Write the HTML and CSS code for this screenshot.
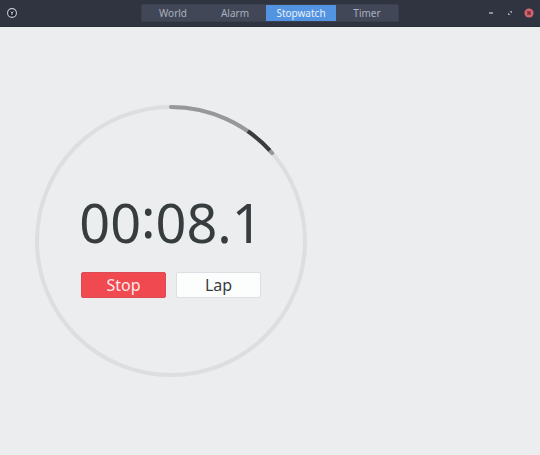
FILE: index.html
```html
<!DOCTYPE html>
<html lang="en">
<head>
    <meta charset="UTF-8">
    <meta name="viewport" content="width=device-width, initial-scale=1.0">
    <title>Clocks</title>
    <link rel="stylesheet" href="styles.css">
</head>
<body>
    <header class="titlebar">
        <button type="button" class="btn_app" aria-label="Clocks menu">
            <svg width="12" height="12" viewBox="0 0 12 12" fill="none">
                <circle cx="6" cy="6" r="4.4" fill="#1d212b" stroke="#c9ced8" stroke-width="1.1"/>
                <path d="M4.6 4.6L6 6L7.4 4.3M6.2 5.8L5.8 8" stroke="#c9ced8" stroke-width="1"/>
            </svg>
        </button>
        <nav class="tabs">
            <button type="button" class="tab">World</button>
            <button type="button" class="tab">Alarm</button>
            <button type="button" class="tab tab_wide active">Stopwatch</button>
            <button type="button" class="tab">Timer</button>
        </nav>
        <div class="win_btns">
            <button type="button" aria-label="Minimize">
                <svg width="10" height="10" viewBox="0 0 10 10"><path d="M3 5H7" stroke="#b4bac6" stroke-width="1.4"/></svg>
            </button>
            <button type="button" aria-label="Maximize">
                <svg width="10" height="10" viewBox="0 0 10 10" fill="#a4abb8"><path d="M4.6 3H7V5.4ZM3 4.6V7H5.4Z"/></svg>
            </button>
            <button type="button" aria-label="Close">
                <svg width="10" height="10" viewBox="0 0 10 10">
                    <circle cx="5" cy="5" r="4.6" fill="#d0656f"/>
                    <path d="M3.4 3.4L6.6 6.6M6.6 3.4L3.4 6.6" stroke="#7e2c3c" stroke-width="1.5"/>
                </svg>
            </button>
        </div>
    </header>

    <main class="stopwatch">
        <div class="dial">
            <svg class="dial_ring" viewBox="0 0 272 272" fill="none" stroke-width="4">
                <circle cx="136" cy="136" r="134" stroke="#dcdee0"/>
                <!-- elapsed seconds, one degree per path unit -->
                <g transform="rotate(-90 136 136)">
                    <circle cx="136" cy="136" r="134" pathLength="360" stroke="#96989a" stroke-linecap="round" stroke-dasharray="49 311"/>
                    <circle cx="136" cy="136" r="134" pathLength="360" stroke="#3b3c3e" stroke-dasharray="0 35 12.5 312.5"/>
                </g>
            </svg>
            <div class="dial_inner">
                <div class="time" role="timer">00<span class="colon">:</span>08.1</div>
                <div class="btn_box">
                    <button type="button" class="btn btn_stop">Stop</button>
                    <button type="button" class="btn btn_lap">Lap</button>
                </div>
            </div>
        </div>
    </main>
</body>
</html>
```

FILE: styles.css
```css
*{margin:0;padding:0;box-sizing:border-box;}
body{display:flex;flex-direction:column;min-height:100vh;background-color:#ebedef;color:#373c3f;font-family:"Noto Sans","Open Sans",sans-serif;}
button{border:0;background:transparent;color:inherit;font-family:inherit;cursor:pointer;}
svg{display:block;}

.titlebar{display:grid;grid-template-columns:1fr auto 1fr;align-items:center;height:27px;padding:0 6px;background-color:#2f3440;border-bottom:1px solid #282c37;}
.btn_app{justify-self:start;}
.tabs{display:flex;border:1px solid #3a404d;border-radius:2px;}
.tab{width:62px;height:16px;background-color:#414756;color:#a9b0be;font-size:10px;line-height:16px;}
.tab_wide{width:70px;}
.tab.active{background-color:#5294e2;color:#e9f1fb;}
.win_btns{display:flex;justify-self:end;gap:9px;}

.stopwatch{display:flex;flex:1;align-items:center;justify-content:center;padding-right:198px;}
.dial{display:grid;width:272px;}
.dial_ring,.dial_inner{grid-area:1/1;}
.dial_inner{display:flex;flex-direction:column;align-items:center;justify-content:center;gap:18px;padding-top:6px;}
.time{font-size:54px;line-height:64px;}
.colon{vertical-align:5px;line-height:1;}
.btn_box{display:flex;gap:10px;}
.btn{width:85px;height:26px;border:1px solid #dcdfe3;border-radius:2px;font-size:16px;line-height:24px;}
.btn_stop{background-color:#f04a50;border-color:#dc4a55;color:#fbe9ea;}
.btn_lap{background-color:#fcfdfd;}
```
